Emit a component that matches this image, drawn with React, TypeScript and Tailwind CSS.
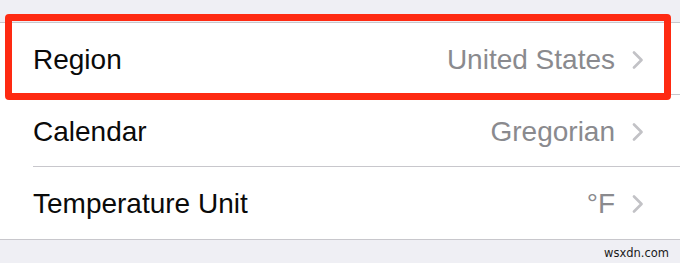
import React from "react";

const rows = [
  { label: "Region", value: "United States" },
  { label: "Calendar", value: "Gregorian" },
  { label: "Temperature Unit", value: "°F" },
];

function Chevron() {
  return (
    <svg width="12" height="18" viewBox="0 0 12 18" className="shrink-0">
      <path d="M2 1.5 L9.5 9 L2 16.5" fill="none" stroke="#c2c2c6" strokeWidth="2.6" strokeLinecap="round" strokeLinejoin="round" />
    </svg>
  );
}

export default function App() {
  return (
    <div
      className="relative w-[680px] h-[263px] bg-[#efeff4] overflow-hidden"
      style={{ fontFamily: '"Liberation Sans", Arial, sans-serif' }}
    >
      <div className="h-[22px]" />
      {/* Settings list */}
      <div className="bg-white border-t border-b border-[#c8c7cc]">
        {rows.map((row, i) => (
          <div key={row.label} className="flex h-[72px]">
            <div className="w-[33px] shrink-0" />
            <div
              className={`flex flex-1 items-center justify-between pr-[36px] pt-[2px] ${
                i < rows.length - 1 ? "border-b border-[#c8c7cc]" : ""
              }`}
            >
              <span className="text-[28px] text-[#0a0a0a]">{row.label}</span>
              <div className="flex items-center gap-[17px]">
                <span className="text-[28px] text-[#8a8a8e]">{row.value}</span>
                <Chevron />
              </div>
            </div>
          </div>
        ))}
      </div>

      {/* Highlight annotation */}
      <div className="absolute left-[5px] top-[14px] w-[666px] h-[86px] border-[7px] border-[#fe2a12] rounded-[4px]" />

      <div className="flex justify-end pr-[11px] pt-[6px] font-['DejaVu_Sans',sans-serif] text-[11.5px] leading-[14px] text-[#1a1a1a]">
        wsxdn.com
      </div>
    </div>
  );
}
